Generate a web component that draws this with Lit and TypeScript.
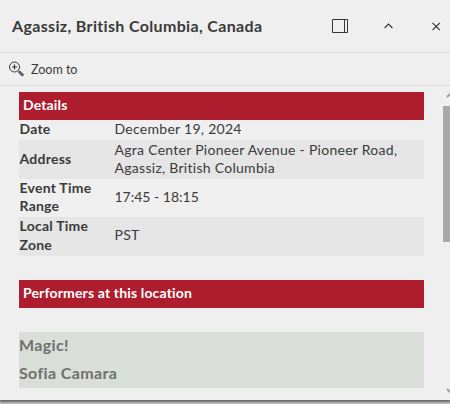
import { LitElement, html, css } from "lit";
import { customElement } from "lit/decorators.js";

interface Detail {
  kind: string;
  label: string[];
  value: string[];
}

const DETAILS: Detail[] = [
  { kind: "date", label: ["Date"], value: ["December 19, 2024"] },
  { kind: "address", label: ["Address"], value: ["Agra Center Pioneer Avenue - Pioneer Road,", "Agassiz, British Columbia"] },
  { kind: "time", label: ["Event Time", "Range"], value: ["17:45 - 18:15"] },
  { kind: "zone", label: ["Local Time", "Zone"], value: ["PST"] },
];

const PERFORMERS = ["Magic!", "Sofia Camara"];

@customElement("app-root")
export class AppRoot extends LitElement {
  static styles = css`
    :host {
      display: block;
      height: 404px;
      overflow: hidden;
      background: #d2d2d2;
      font-family: Lato, "Open Sans", sans-serif;
      color: #3a3a3a;
    }
    * { box-sizing: border-box; }
    svg { display: block; fill: none; stroke: #363636; }
    .popup {
      display: flex;
      flex-direction: column;
      height: 400px;
      background: #efefef;
      box-shadow: 0 1px 3px 1px rgba(0, 0, 0, 0.6);
    }
    .header {
      display: flex;
      align-items: center;
      height: 53px;
      padding-left: 12px;
      border-bottom: 1px solid #dcdcdc;
    }
    .title {
      flex: 1;
      padding-bottom: 1px;
      font-size: 16px;
      font-weight: 700;
      line-height: 20px;
      letter-spacing: 0.34px;
      white-space: nowrap;
    }
    .tools { display: flex; align-items: center; }
    .dock { margin-right: 36px; }
    .collapse { margin-right: 39px; stroke-width: 1.2; }
    .close { margin-right: 9px; stroke-width: 1.2; }
    .actions {
      display: flex;
      align-items: center;
      height: 33px;
      padding-left: 9px;
      border-bottom: 1px solid #dcdcdc;
      font-size: 12.5px;
      gap: 6px;
    }
    .body { display: flex; flex: 1; min-height: 0; }
    .content { width: 405px; margin: 6px 19px 0 19px; flex: none; }
    .band {
      height: 28px;
      padding-left: 4px;
      line-height: 26px;
      background: #ad1d2d;
      color: #fff;
      font-size: 14px;
      font-weight: 700;
      letter-spacing: 0.15px;
    }
    .row {
      display: grid;
      grid-template-columns: 95px 1fr;
      align-items: center;
      height: 39px;
      padding-bottom: 2px;
      padding-left: 0.5px;
      font-size: 14px;
      line-height: 18px;
      letter-spacing: 0.28px;
      white-space: nowrap;
    }
    .row.date { height: 20px; }
    .row.time { height: 38px; }
    .row.time .value { letter-spacing: 0; }
    .row.zone { align-content: center; padding-bottom: 3px; }
    .row.zone .label { line-height: 19px; }
    .row:nth-child(even) { background: #e5e5e5; }
    .label { font-weight: 700; letter-spacing: 0.24px; }
    .details { margin-bottom: 24px; }
    .performers {
      margin-top: 24px;
      height: 56px;
      background: #d9ded8;
      color: #6e716e;
      font-size: 16px;
      font-weight: 700;
      letter-spacing: 0.37px;
    }
    .performer { height: 28px; line-height: 26px; }
    .scroll {
      display: flex;
      flex: none;
      flex-direction: column;
      width: 7px;
      padding: 5px 0;
    }
    .thumb { flex: none; height: 136px; margin-top: 8px; margin-bottom: auto; background: #a8a8a8; }
    .scroll svg { flex: none; width: 7px; height: 7px; stroke: #999; stroke-width: 1.8; }
  `;

  render() {
    return html`
      <div class="popup">
        <div class="header">
          <div class="title">Agassiz, British Columbia, Canada</div>
          <div class="tools">
            <svg class="dock" width="16" height="14"><path d="M.5.5h15v13H.5zM12.5.5v13" /></svg>
            <svg class="collapse" width="9" height="6"><path d="M.6 5 4.5 1.1 8.4 5" /></svg>
            <svg class="close" width="9" height="9"><path d="m.5.8 7.4 7.4M7.9.8.5 8.2" /></svg>
          </div>
        </div>
        <div class="actions">
          <svg width="16" height="16">
            <circle cx="5.5" cy="6" r="5" />
            <path d="M3 6h5M5.5 3.5v5" stroke-width="1.2" />
            <path d="m9 9.5 1.5 1.5" />
            <path d="m10.1 10.6 4 4" stroke-width="2.7" />
            <path d="m10.5 11 3.2 3.2" stroke="#bbb" stroke-width=".8" />
          </svg>
          <span>Zoom to</span>
        </div>
        <div class="body">
          <div class="content">
            <div class="band">Details</div>
            <div class="details">
              ${DETAILS.map(
                (d) => html`<div class="row ${d.kind}">
                  <div class="label">${d.label.map((t) => html`<div>${t}</div>`)}</div>
                  <div class="value">${d.value.map((t) => html`<div>${t}</div>`)}</div>
                </div>`
              )}
            </div>
            <div class="band">Performers at this location</div>
            <div class="performers">${PERFORMERS.map((p) => html`<div class="performer">${p}</div>`)}</div>
          </div>
          <div class="scroll">
            <svg><path d="M4 6 8 2" /></svg>
            <div class="thumb"></div>
            <svg><path d="M4 1 8 5" /></svg>
          </div>
        </div>
      </div>
    `;
  }
}
